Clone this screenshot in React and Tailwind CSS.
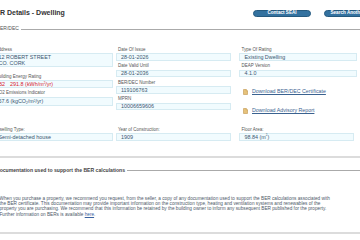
import React from 'react';

function Label({ children }) {
  return <div className="h-[6px] leading-[6px] pl-[2.5px] text-[4.5px] text-[#555] whitespace-nowrap">{children}</div>;
}

function Box({ children, className = '' }) {
  return (
    <div className={`bg-[#f1fbfe] border border-[#d6ebf2] pl-[4.5px] text-[5.4px] text-[#3a566f] whitespace-nowrap flex items-center ${className}`}>
      {children}
    </div>
  );
}

function DocIcon() {
  return (
    <svg width="5" height="6" viewBox="0 0 5 6" className="shrink-0">
      <path d="M0.5 0.5 H3.2 L4.5 1.8 V5.5 H0.5 Z" fill="#e6c27a" stroke="#b8893a" strokeWidth="0.5" />
      <path d="M3.2 0.5 V1.8 H4.5" fill="#f5dfad" stroke="#b8893a" strokeWidth="0.4" />
    </svg>
  );
}

function DownloadLink({ children }) {
  return (
    <div className="flex items-center h-[7px] pl-[4px] gap-[4px]">
      <DocIcon />
      <span className="text-[5.3px] text-[#3a6290] underline whitespace-nowrap">{children}</span>
    </div>
  );
}

export default function App() {
  return (
    <div className="w-[360px] h-[240px] overflow-hidden bg-white font-['Liberation_Sans',Arial,sans-serif]">
      {/* Header */}
      <div className="flex items-center h-[26px]">
        <h1 className="flex-1 min-w-0 -ml-[9.8px] text-[7px] font-bold text-[#333] whitespace-nowrap">BER Details - Dwelling</h1>
        <div className="shrink-0 flex gap-[13px] -mr-[22px]">
          <button className="w-[58px] h-[7px] rounded-full bg-[#33719f] border border-[#24597f] text-white text-[4.6px] font-bold leading-none">Contact SEAI</button>
          <button className="w-[58px] h-[7px] rounded-full bg-[#33719f] border border-[#24597f] text-white text-[4.6px] font-bold leading-none whitespace-nowrap">Search Another BER</button>
        </div>
      </div>

      {/* BER/DEC fieldset */}
      <div className="flex items-center h-[6px]">
        <span className="-ml-[3.3px] text-[5px] text-[#555] whitespace-nowrap">BER/DEC</span>
        <div className="flex-1 h-px bg-[#aaa] ml-[2px]" />
      </div>

      <div className="flex mt-[14.5px]">
        {/* left */}
        <div className="w-[120px] -ml-[7px] shrink-0">
          <Label>Address</Label>
          <Box className="mt-[0.5px] h-[13.5px] !items-start flex-col justify-center leading-[6px]">
            <span>12 ROBERT STREET</span>
            <span>CO. CORK</span>
          </Box>
          <div className="mt-[7.2px]"><Label>Building Energy Rating</Label></div>
          <Box className="mt-[0.3px] h-[8px] text-[#d8232f]">
            <span>B2</span>
            <span className="ml-[5px]">291.8 (kWh/m<sup className="text-[3px]">2</sup>/yr)</span>
          </Box>
          <div className="mt-[2.3px]"><Label>CO2 Emissions Indicator</Label></div>
          <Box className="mt-[0.7px] h-[9px]">
            <span>57.6 (kgCO<sub className="text-[3px]">2</sub>/m<sup className="text-[3px]">2</sup>/yr)</span>
          </Box>
        </div>

        {/* middle */}
        <div className="w-[115px] ml-[2.5px] shrink-0">
          <Label>Date Of Issue</Label>
          <Box className="mt-[0.5px] h-[7.5px]">28-01-2026</Box>
          <div className="mt-[2.5px]"><Label>Date Valid Until</Label></div>
          <Box className="mt-[0.5px] h-[7.5px]">28-01-2036</Box>
          <div className="mt-[2.5px]"><Label>BER/DEC Number</Label></div>
          <Box className="mt-[0.5px] h-[7.5px]">119106763</Box>
          <div className="mt-[2.5px]"><Label>MPRN</Label></div>
          <Box className="mt-[0.5px] h-[7.5px]">10006659606</Box>
        </div>

        {/* right */}
        <div className="w-[118px] ml-[8.5px] shrink-0">
          <Label>Type Of Rating</Label>
          <Box className="mt-[0.5px] h-[7.5px]">Existing Dwelling</Box>
          <div className="mt-[2.5px]"><Label>DEAP Version</Label></div>
          <Box className="mt-[0.5px] h-[7.5px]">4.1.0</Box>
          <div className="mt-[11.8px]"><DownloadLink>Download BER/DEC Certificate</DownloadLink></div>
          <div className="mt-[11.7px]"><DownloadLink>Download Advisory Report</DownloadLink></div>
        </div>
      </div>

      {/* dwelling row */}
      <div className="flex mt-[12.5px]">
        <div className="w-[120px] -ml-[7px] shrink-0">
          <Label>Dwelling Type:</Label>
          <Box className="h-[8px]">Semi-detached house</Box>
        </div>
        <div className="w-[115px] ml-[2.5px] shrink-0">
          <Label>Year of Construction:</Label>
          <Box className="h-[8px]">1909</Box>
        </div>
        <div className="w-[115px] ml-[8.5px] shrink-0">
          <Label>Floor Area:</Label>
          <Box className="h-[8px]">98.84 (m<sup className="text-[3px]">2</sup>)</Box>
        </div>
      </div>

      <div className="mt-[15px] h-[2px] bg-[#dcdcdc]" />

      {/* documentation */}
      <div className="flex items-center h-[6px] mt-[10px]">
        <span className="-ml-[4px] text-[5.1px] font-bold text-[#444] whitespace-nowrap">Documentation used to support the BER calculations</span>
        <div className="flex-1 h-px bg-[#aaa] ml-[2px]" />
      </div>

      <div className="mt-[21.6px] text-[4.7px] leading-[5.4px] text-[#4d5868] whitespace-nowrap -ml-[0.5px]">
        <div>When you purchase a property, we recommend you request, from the seller, a copy of any documentation used to support the BER calculations associated with</div>
        <div>the BER certificate. This documentation may provide important information on the construction type, heating and ventilation systems and renewables of the</div>
        <div>property you are purchasing. We recommend that this information be retained by the building owner to inform any subsequent BER published for the property.</div>
        <div>Further information on BERs is available <span className="text-[#3a62a0] underline">here</span>.</div>
      </div>

      <div className="mt-[15px] h-[2px] bg-[#dcdcdc]" />
    </div>
  );
}
